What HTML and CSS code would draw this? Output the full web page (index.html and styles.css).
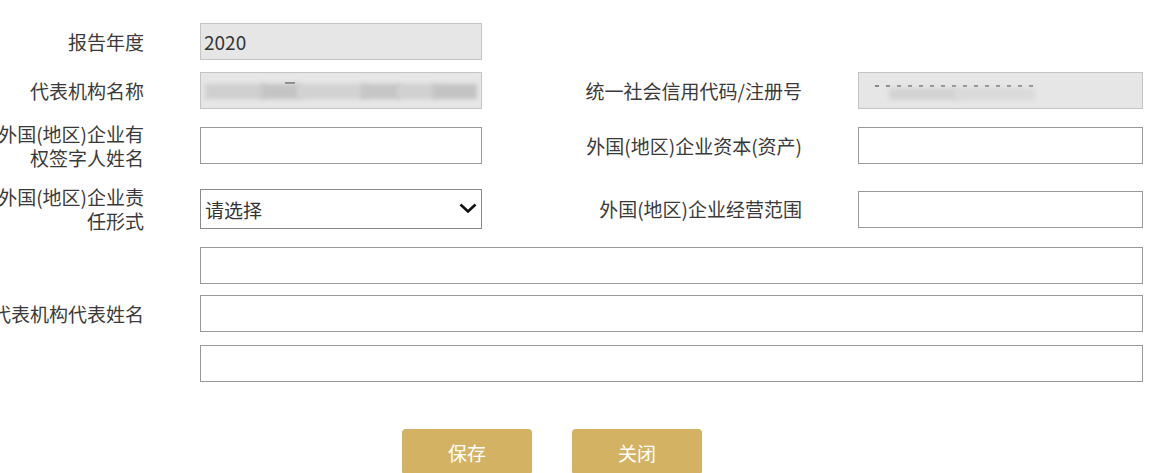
FILE: index.html
```html
<!DOCTYPE html>
<html lang="zh-CN">
<head>
    <meta charset="UTF-8">
    <title>代表机构年度报告</title>
    <link rel="stylesheet" href="styles.css">
</head>
<body>
    <div class="report-form">
        <!-- 第一行 -->
        <div class="label">报告年度</div>
        <div class="cell"><input class="field readonly" type="text" value="2020" readonly></div>

        <!-- 第二行 -->
        <div class="label">代表机构名称</div>
        <div class="cell">
            <div class="field readonly smear-box">
                <span class="dash" style="left: 84px; top: 9px; width: 10px;"></span>
                <span class="blob" style="left: 4px; width: 60px; background: #cfcfcf;"></span>
                <span class="blob" style="left: 60px; width: 40px; background: #c4c4c4;"></span>
                <span class="blob" style="left: 96px; width: 70px; background: #d2d2d2;"></span>
                <span class="blob" style="left: 160px; width: 40px; background: #c6c6c6;"></span>
                <span class="blob" style="left: 196px; width: 40px; background: #d0d0d0;"></span>
                <span class="blob" style="left: 232px; width: 44px; background: #c3c3c3;"></span>
            </div>
        </div>
        <div class="label label-right">统一社会信用代码/注册号</div>
        <div class="cell">
            <div class="field readonly smear-box">
                <span class="dots"></span>
                <span class="blob" style="left: 30px; top: 15px; width: 70px; height: 12px; background: #d3d3d3;"></span>
                <span class="blob" style="left: 96px; top: 15px; width: 80px; height: 12px; background: #dadada;"></span>
            </div>
        </div>

        <!-- 第三行 -->
        <div class="label label-wrap">外国(地区)企业有权签字人姓名</div>
        <div class="cell"><input class="field" type="text"></div>
        <div class="label label-right">外国(地区)企业资本(资产)</div>
        <div class="cell"><input class="field" type="text"></div>

        <!-- 第四行 -->
        <div class="label label-wrap">外国(地区)企业责任形式</div>
        <div class="cell">
            <div class="select-box">
                <select class="select">
                    <option>请选择</option>
                </select>
                <svg class="chevron" width="18" height="11" viewBox="0 0 18 11">
                    <path d="M1.5 1.5 L9 8.5 L16.5 1.5" fill="none" stroke="#111" stroke-width="2.6"/>
                </svg>
            </div>
        </div>
        <div class="label label-right">外国(地区)企业经营范围</div>
        <div class="cell"><input class="field" type="text"></div>

        <!-- 代表姓名 -->
        <div class="label"></div>
        <div class="cell wide"><input class="field" type="text"></div>
        <div class="label">代表机构代表姓名</div>
        <div class="cell wide"><input class="field" type="text"></div>
        <div class="label"></div>
        <div class="cell wide"><input class="field" type="text"></div>
    </div>

    <div class="actions">
        <button class="btn" type="button">保存</button>
        <button class="btn" type="button">关闭</button>
    </div>
</body>
</html>
```

FILE: styles.css
```css
body {
    margin: 0;
    padding-top: 17px;
    background-color: #fff;
    font-family: 'Microsoft YaHei', 'Noto Sans CJK SC', sans-serif;
    font-size: 19px;
    color: #3a3a3a;
    overflow: hidden;
}

/* 表单整体左移，左侧标签被截掉一点 */
.report-form {
    display: grid;
    grid-template-columns: 210px 282px 376px 285px;
    grid-template-rows: 49px 49px 61px 66px 47px 49px 50px;
    margin-left: -10px;
    width: 1153px;
}

.label {
    grid-column: 1;
    display: flex;
    align-items: center;
    justify-content: flex-end;
    padding-right: 56px;
    text-align: right;
    line-height: 24px;
    white-space: nowrap;
}

.label-wrap {
    white-space: normal;
}

.label-right {
    grid-column: 3;
}

.cell {
    display: flex;
    align-items: center;
}

.cell.wide {
    grid-column: 2 / 5;
}

.field {
    box-sizing: border-box;
    width: 100%;
    height: 37px;
    margin: 0;
    padding: 0 3px;
    border: 1px solid #999;
    background-color: #fff;
    font-family: inherit;
    font-size: 19px;
    color: #333;
    outline: none;
}

.field.readonly {
    background-color: #e6e6e6;
    border-color: #c4c4c4;
}

/* 打码的内容 */
.smear-box {
    position: relative;
    overflow: hidden;
}

.blob {
    position: absolute;
    top: 11px;
    height: 15px;
    filter: blur(2px);
}

.dash {
    position: absolute;
    height: 2px;
    background: #777;
}

.dots {
    position: absolute;
    left: 16px;
    top: 12px;
    width: 162px;
    height: 2px;
    background: repeating-linear-gradient(90deg, #8a8a8a 0 4px, transparent 4px 11px);
}

.select-box {
    position: relative;
    width: 285px;
}

.select {
    box-sizing: border-box;
    width: 100%;
    height: 40px;
    margin: 0;
    padding: 0 4px;
    border: 1px solid #8a8a8a;
    border-radius: 0;
    background-color: #fff;
    font-family: inherit;
    font-size: 19px;
    color: #333;
    appearance: none;
    -webkit-appearance: none;
}

.chevron {
    position: absolute;
    right: 5px;
    top: 14px;
    pointer-events: none;
}

.actions {
    display: flex;
    gap: 40px;
    padding-left: 402px;
    margin-top: 41px;
}

.btn {
    width: 130px;
    height: 46px;
    border: none;
    border-radius: 4px;
    background-color: #d4b263;
    color: #fff;
    font-family: inherit;
    font-size: 19px;
    cursor: pointer;
}
```
